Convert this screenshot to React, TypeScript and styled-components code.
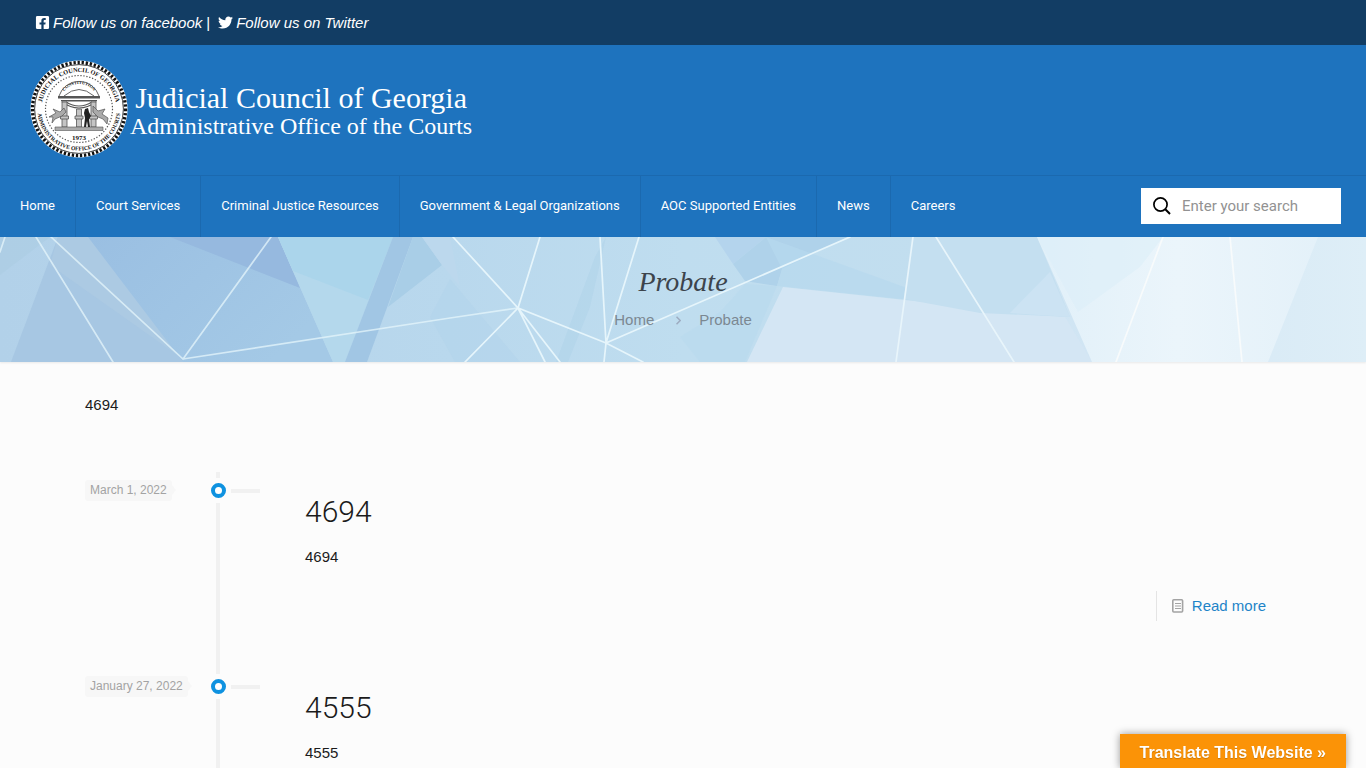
import React from "react";
import styled, { createGlobalStyle } from "styled-components";
import { FaFacebookSquare, FaTwitter } from "react-icons/fa";

const GlobalStyle = createGlobalStyle`
  *, *::before, *::after { box-sizing: border-box; }
  body {
    margin: 0;
    background: #fcfcfc;
    color: #1b1b1b;
    font: 15px/28px "Liberation Sans", Arial, sans-serif;
  }
  h1, h2, p, ul, ol { margin: 0; padding: 0; font-weight: 400; }
  ul, ol { list-style: none; }
  a { text-decoration: none; }
`;

const ActionBar = styled.div`
  display: flex;
  align-items: center;
  height: 45px;
  padding: 0 35px;
  background: #123d64;
  color: #fff;
`;

const Divider = styled.span`
  padding: 0 8px 0 4px;
`;

const SocialLink = styled.a`
  display: flex;
  align-items: center;
  gap: 3px;
  color: #fff;
  font-style: italic;
`;

const Header = styled.header`
  background: #1e73be;
`;

const Brand = styled.a`
  display: flex;
  align-items: center;
  height: 130px;
  padding: 0 30px 2px;
  color: #fff;
  font-family: "Liberation Serif", "Times New Roman", serif;
`;

const BrandText = styled.span`
  display: flex;
  flex-direction: column;
  align-items: center;
  padding: 6px 0 0 2px;
`;

const BrandLine = styled.span<{ $size: number }>`
  font-size: ${(p) => p.$size}px;
  line-height: 28px;
  white-space: nowrap;
`;

const MenuRow = styled.div`
  display: flex;
  align-items: center;
  justify-content: space-between;
  border-top: 1px solid #1b69af;
  padding-right: 25px;
`;

const Menu = styled.ul`
  display: flex;
`;

const MenuItem = styled.li`
  & + & { border-left: 1px solid #1b69af; }
`;

const MenuLink = styled.a`
  display: block;
  padding: 0 20px 1px;
  color: #fff;
  font: 400 13px/60px Roboto, sans-serif;
  white-space: nowrap;
`;

const SearchForm = styled.form`
  display: flex;
  align-items: center;
  gap: 10px;
  width: 200px;
  height: 36px;
  margin-bottom: 2px;
  padding: 0 11px;
  background: #fff;
`;

const SearchInput = styled.input`
  flex: 1;
  min-width: 0;
  border: 0;
  padding: 0;
  outline: 0;
  background: transparent;
  color: #333;
  font: 400 15px/20px Roboto, sans-serif;
  &::placeholder { color: #929292; opacity: 1; }
`;

const Banner = styled.section`
  position: relative;
  display: flex;
  flex-direction: column;
  align-items: center;
  gap: 8px;
  height: 125px;
  padding-top: 27px;
  background: #bcdaee;
  box-shadow: 0 1px 2px rgba(0, 0, 0, 0.08);
`;

const BannerArt = styled.svg`
  position: absolute;
  inset: 0;
  width: 100%;
  height: 100%;
`;

const PageTitle = styled.h1`
  position: relative;
  color: #3c444c;
  font: italic 400 28px/35px "Liberation Serif", serif;
`;

const Crumbs = styled.ol`
  position: relative;
  display: flex;
  align-items: center;
  gap: 18px;
  line-height: 26px;
`;

const Crumb = styled.li`
  display: flex;
  align-items: center;
  gap: 22px;
  color: #7b8892;
  a { color: inherit; }
`;

const Content = styled.main`
  max-width: 1196px;
  margin: 0 auto;
  padding-top: 29px;
`;

const Timeline = styled.ul`
  padding-top: 53px;
`;

const Post = styled.li`
  display: grid;
  grid-template-columns: 126px 49px 1fr;
  min-height: 196px;
`;

const DateTag = styled.time`
  position: relative;
  justify-self: start;
  align-self: start;
  margin-top: 8px;
  padding: 0 5px;
  border-radius: 3px;
  background: #f7f7f7;
  color: #a3a3a3;
  font-size: 12px;
  line-height: 21px;
  &::after {
    content: "";
    position: absolute;
    left: 100%;
    top: 5px;
    border: solid transparent;
    border-width: 5px 0 5px 4px;
    border-left-color: #f7f7f7;
  }
`;

const Rail = styled.div`
  display: grid;
  grid-template-columns: 15px 29px;
  grid-template-rows: 6px 15px 1fr;
  gap: 5px;
  align-items: center;
`;

const Stem = styled.span`
  grid-column: 1 / -1;
  width: 4px;
  height: 100%;
  margin-left: 5px;
  background: #f1f1f1;
`;

const Dot = styled.span`
  width: 15px;
  height: 15px;
  border: 4px solid #0f92e0;
  border-radius: 50%;
  background: #fff;
`;

const Tick = styled.span`
  height: 4px;
  background: #f1f1f1;
`;

const PostBody = styled.article`
  display: flex;
  flex-direction: column;
  padding: 20px 0 47px 45px;
`;

const PostTitle = styled.h2`
  font: 300 30px/40px Roboto, sans-serif;
  color: #1b1b1b;
`;

const Excerpt = styled.p`
  margin: 11px 0 20px;
`;

const ReadMore = styled.a`
  display: flex;
  align-items: center;
  align-self: flex-end;
  gap: 8px;
  padding: 0 15px;
  border-left: 1px solid #e4e4e4;
  color: #1e84c8;
  line-height: 30px;
`;

const Translate = styled.button`
  position: fixed;
  right: 20px;
  bottom: 0;
  height: 34px;
  padding: 4px 20px 0;
  border: 0;
  background: #fb9307;
  box-shadow: 0 0 8px rgba(0, 0, 0, 0.4);
  color: #fff;
  font: 700 16px/20px "Liberation Sans", Arial, sans-serif;
  text-shadow: 0 1px 1px rgba(0, 0, 0, 0.2);
  cursor: pointer;
`;

const menu = [
  "Home",
  "Court Services",
  "Criminal Justice Resources",
  "Government & Legal Organizations",
  "AOC Supported Entities",
  "News",
  "Careers",
];

const posts = [
  { title: "4694", date: "March 1, 2022", iso: "2022-03-01" },
  { title: "4555", date: "January 27, 2022", iso: "2022-01-27" },
];

const Seal = () => (
  <svg width="98" height="98" viewBox="0 0 98 98" role="img" aria-label="Seal">
    <defs>
      <path id="arcTop" d="M13 60 A37.5 37.5 0 1 1 85 60" />
      <path id="arcBottom" d="M7.8 44 A41.5 41.5 0 1 0 90.2 44" />
      <path id="arcMotto" d="M32 35 A18.5 18.5 0 0 1 66 35" />
    </defs>
    <circle cx="49" cy="49" r="48.5" fill="#fff" />
    <circle cx="49" cy="49" r="46.5" fill="none" stroke="#111" strokeWidth="3.4" strokeDasharray="2.3 1.8" />
    <circle cx="49" cy="49" r="44.4" fill="#fff" stroke="#111" strokeWidth="0.8" />
    <circle cx="49" cy="49" r="33.5" fill="none" stroke="#555" strokeWidth="1.2" strokeDasharray="1.3 1.7" />
    <g fill="#111" fontFamily="Liberation Serif, serif" fontWeight="700" textAnchor="middle">
      <text fontSize="6.3"><textPath href="#arcTop" startOffset="50%">JUDICIAL COUNCIL OF GEORGIA</textPath></text>
      <text fontSize="5.7"><textPath href="#arcBottom" startOffset="50%">ADMINISTRATIVE OFFICE OF THE COURTS</textPath></text>
      <text fontSize="4.4"><textPath href="#arcMotto" startOffset="50%">CONSTITUTION</textPath></text>
      <text x="49" y="79.5" fontSize="7">1973</text>
    </g>
    <path d="M29 36 A21 21 0 0 1 69 36 M34 36 Q49 23 64 36" fill="none" stroke="#555" strokeWidth="0.9" />
    <path d="M28 36 H70 V38.5 H28Z M31 40 H67 V41.5 H31Z" fill="#555" />
    <path d="M32 42 Q49 54 66 42 M36 42 Q49 50 62 42" fill="none" stroke="#555" strokeWidth="1.2" />
    <g fill="#c4c4c4" stroke="#555" strokeWidth="0.8">
      <path d="M32 42 h5 v25 h-5Z M46.5 49 h5 v18 h-5Z M61 42 h5 v25 h-5Z" />
      <path d="M30.5 56 h8 v3 h-8Z M45 56 h8 v3 h-8Z M59.5 56 h8 v3 h-8Z" />
    </g>
    <path d="M19 57 l7-4 -3-4 7 3 4-4 2 4 -4 4 -7 3 -3 4 1-6Z M78 58 l-6-4 3-5 -7 2 -5-5 0 6 5 5 5 2 4 5Z" fill="#aaa" stroke="#555" strokeWidth="0.7" />
    <path d="M25 67 H73 V70.5 H25Z" fill="#aaa" stroke="#555" strokeWidth="0.6" />
    <path d="M55 49 l3-1 1 4 2 4 -2 3 1 8 h-2 l-1-6 -1 6 h-2 l1-9 -1-5Z" fill="#222" />
  </svg>
);

const Polygons = () => (
  <BannerArt viewBox="0 0 1366 125" preserveAspectRatio="xMidYMid slice" aria-hidden="true">
    <defs>
      <linearGradient id="sky" x1="0" x2="1" y1="0" y2="0">
        <stop offset="0" stopColor="#b2d1e9" />
        <stop offset="0.33" stopColor="#b9d8ed" />
        <stop offset="0.5" stopColor="#bfddef" />
        <stop offset="0.68" stopColor="#c2deef" />
        <stop offset="0.8" stopColor="#d2e6f4" />
        <stop offset="1" stopColor="#deeef7" />
      </linearGradient>
      <linearGradient id="deep" x1="0" x2="1" y1="0" y2="0.5">
        <stop offset="0" stopColor="#9abfe2" />
        <stop offset="1" stopColor="#a4c9e6" />
      </linearGradient>
      <linearGradient id="pale" x1="0" x2="1" y1="0" y2="0">
        <stop offset="0" stopColor="#e1f0f9" />
        <stop offset="0.5" stopColor="#ebf5fb" />
        <stop offset="1" stopColor="#e4f1f9" />
      </linearGradient>
    </defs>
    <rect width="1366" height="125" fill="url(#sky)" />
    <path d="M0 38 L50 0 H0Z" fill="#aacbe2" opacity="0.5" />
    <path d="M58 0 H90 L183 122 V125 H11Z" fill="#a7c7e3" />
    <path d="M58 0 H90 L183 122 L50 28Z" fill="#afcbe2" opacity="0.6" />
    <path d="M88 0 H278 L333 125 H183Z" fill="url(#deep)" />
    <path d="M170 0 H278 L300 51Z" fill="#96b9df" />
    <path d="M278 0 H393 L345 125 H333Z" fill="#b4d8ec" />
    <path d="M278 0 H393 L368 63 L293 34Z" fill="#abd5eb" />
    <path d="M393 0 H413 L367 125 H345Z" fill="#a1c6e4" />
    <path d="M413 0 H422 L442 28 L388 70Z" fill="#a9cee7" />
    <path d="M422 0 H450 L460 50 L442 28Z" fill="#bcd8ed" />
    <path d="M450 42 L520 125 H455 L430 80Z" fill="#b2d4eb" opacity="0.5" />
    <path d="M595 20 L606 0 L590 70 L568 125 H556Z" fill="#b0d3ea" opacity="0.6" />
    <path d="M680 100 L720 75 L745 47 L777 49 L745 125 H700Z" fill="#b9daee" opacity="0.7" />
    <path d="M715 0 H766 L733 27Z" fill="#b4d4ed" />
    <path d="M766 0 H848 L782 32 L777 49 L745 44 L733 27Z" fill="#afd2ea" />
    <path d="M766 0 L910 52 V63 L777 49 L782 32Z" fill="#b7d8ee" opacity="0.7" />
    <path d="M783 50 L905 63 L1065 80 L1092 125 H747Z" fill="#d4e6f4" />
    <path d="M911 0 H1037 L1070 80 L980 76 L904 62Z" fill="#c4dff0" />
    <path d="M1010 76 L1050 35 L1070 80Z" fill="#cce3f3" />
    <path d="M1037 0 H1318 L1268 125 H1092Z" fill="url(#pale)" />
    <path d="M1037 0 H1163 L1140 30 L1078 75Z" fill="#dceef8" opacity="0.6" />
    <g stroke="#e6f5fb" strokeWidth="1.7" strokeLinecap="round" fill="none">
      <path d="M5 0 L0 15 M36 0 L113 125 M51 0 L183 122 L271 0 M183 122 L450 81 L518 71" opacity="0.75" />
      <path d="M453 0 L518 71 L540 0 M465 125 L518 71 L545 125 M560 125 L518 71 L606 106" />
      <path d="M600 0 L606 106 L639 0 M604 125 L606 106 L643 125 M606 106 L850 0" />
      <path d="M913 0 L896 125 M936 0 L1014 125" stroke="#e8f5fb" />
      <path d="M1163 0 L1116 125 M1230 0 L1242 125" stroke="#f8fbfc" />
    </g>
  </BannerArt>
);

const SearchIcon = () => (
  <svg width="20" height="20" viewBox="0 0 20 20" fill="none" stroke="#000" strokeWidth="1.7" aria-hidden="true">
    <circle cx="8.5" cy="8.5" r="6.6" />
    <path d="M13.3 13.3 L18 18" strokeWidth="2" />
  </svg>
);

const DocIcon = () => (
  <svg width="12" height="14" viewBox="0 0 12 14" fill="none" stroke="#a3a3a3" aria-hidden="true">
    <rect x="0.8" y="0.8" width="9.8" height="12.2" rx="1" strokeWidth="1.6" />
    <path d="M3 4.5 H9 M3 7 H9 M3 9.5 H9" />
  </svg>
);

const Chevron = () => (
  <svg width="5" height="9" viewBox="0 0 5 9" fill="none" stroke="#9dabc0" strokeWidth="1.5" aria-hidden="true">
    <path d="M0.5 0.7 L4.2 4.5 L0.5 8.3" />
  </svg>
);

export default function App() {
  return (
    <>
      <GlobalStyle />
      <ActionBar>
        <SocialLink href="#facebook"><FaFacebookSquare size={15} />Follow us on facebook</SocialLink>
        <Divider>|</Divider>
        <SocialLink href="#twitter"><FaTwitter size={15} />Follow us on Twitter</SocialLink>
      </ActionBar>
      <Header>
        <Brand href="#home">
          <Seal />
          <BrandText>
            <BrandLine $size={30}>Judicial Council of Georgia</BrandLine>
            <BrandLine $size={24}>Administrative Office of the Courts</BrandLine>
          </BrandText>
        </Brand>
        <MenuRow>
          <nav>
            <Menu>
              {menu.map((label) => (
                <MenuItem key={label}><MenuLink href="#menu">{label}</MenuLink></MenuItem>
              ))}
            </Menu>
          </nav>
          <SearchForm role="search">
            <SearchIcon />
            <SearchInput type="text" aria-label="Search" placeholder="Enter your search" />
          </SearchForm>
        </MenuRow>
      </Header>
      <Banner>
        <Polygons />
        <PageTitle>Probate</PageTitle>
        <Crumbs>
          <Crumb><a href="#home">Home</a><Chevron /></Crumb>
          <Crumb><a href="#probate">Probate</a></Crumb>
        </Crumbs>
      </Banner>
      <Content>
        <p>4694</p>
        <Timeline>
          {posts.map((post) => (
            <Post key={post.title}>
              <DateTag dateTime={post.iso}>{post.date}</DateTag>
              <Rail>
                <Stem />
                <Dot />
                <Tick />
                <Stem />
              </Rail>
              <PostBody>
                <PostTitle>{post.title}</PostTitle>
                <Excerpt>{post.title}</Excerpt>
                <ReadMore href="#post"><DocIcon />Read more</ReadMore>
              </PostBody>
            </Post>
          ))}
        </Timeline>
      </Content>
      <Translate type="button">Translate This Website »</Translate>
    </>
  );
}
